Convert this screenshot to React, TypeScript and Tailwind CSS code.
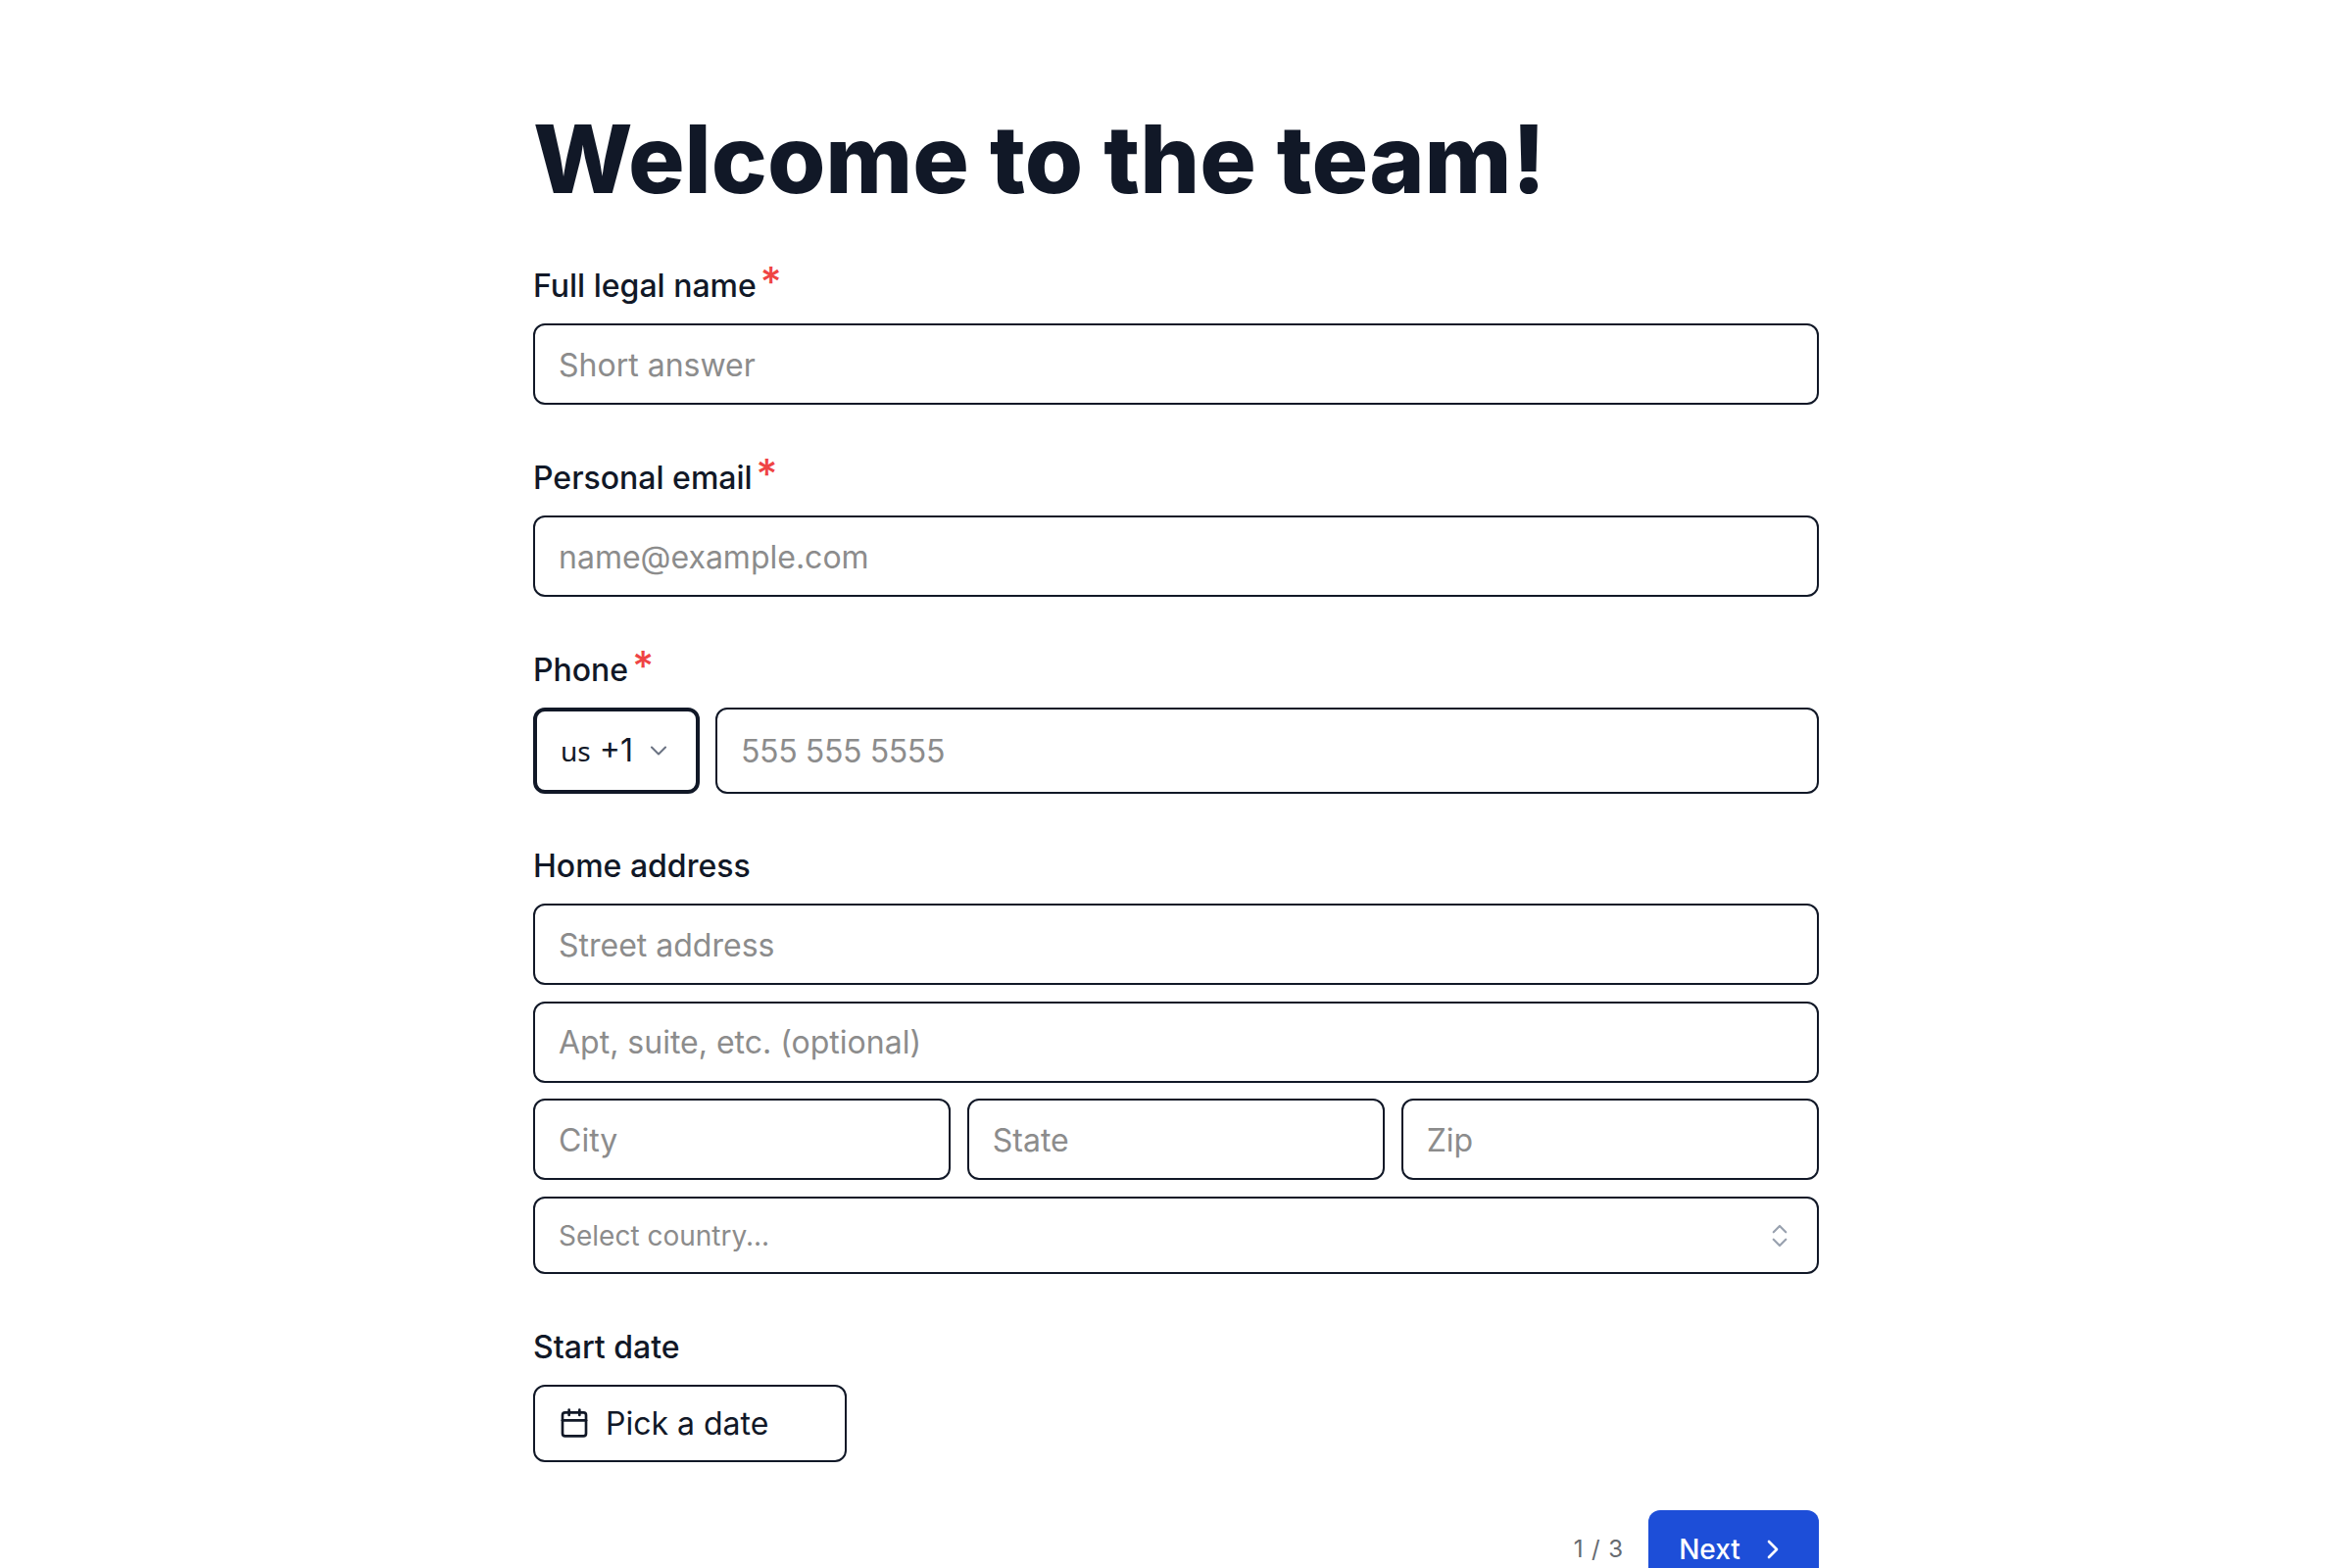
import { Calendar, ChevronDown, ChevronRight, ChevronsUpDown } from 'lucide-react';

const inputClass =
  'block w-full min-w-0 h-[83px] px-[24px] pt-[1px] rounded-[12px] border-2 border-[#111827] bg-white text-[32px] text-[#111827] outline-none placeholder:text-[#8c8c8c]';

function Label({ text, required }: { text: string; required?: boolean }) {
  return (
    <label className="flex items-start h-[44px] mb-[16px] text-[32px] leading-[43px] font-medium text-[#111827]">
      {text}
      {required && (
        <span className="ml-[4px] -mt-[4px] text-[42px] leading-[44px] font-medium text-[#ef4444]">*</span>
      )}
    </label>
  );
}

export default function App() {
  return (
    <div className="h-[1600px] overflow-hidden bg-white font-['Inter',sans-serif]">
      <div className="w-[1312px] ml-[544px] pt-[96px]">
        <h1 className="h-[132px] mb-[42px] text-[96px] leading-[132px] font-extrabold text-[#111827]">
          Welcome to the team!
        </h1>

        <div className="mb-[53px]">
          <Label text="Full legal name" required />
          <input className={inputClass} placeholder="Short answer" />
        </div>

        <div className="mb-[53px]">
          <Label text="Personal email" required />
          <input className={inputClass} placeholder="name@example.com" />
        </div>

        <div className="mb-[52px]">
          <Label text="Phone" required />
          <div className="flex gap-[16px]">
            <button className="flex items-center justify-center gap-[12px] w-[170px] h-[88px] shrink-0 rounded-[12px] border-4 border-[#111827] text-[32px] text-[#111827]">
              <span>
                <span className="font-['Noto_Sans',sans-serif] text-[28px]">us</span> +1
              </span>
              <ChevronDown className="w-[28px] h-[28px] text-gray-500" strokeWidth={1.75} />
            </button>
            <input className={inputClass + ' h-[88px] tracking-[-0.38px]'} placeholder="555 555 5555" />
          </div>
        </div>

        <div className="mb-[53px]">
          <Label text="Home address" />
          <div className="flex flex-col gap-[16.5px]">
            <input className={inputClass} placeholder="Street address" />
            <input className={inputClass} placeholder="Apt, suite, etc. (optional)" />
            <div className="grid grid-cols-3 gap-[16.5px]">
              <input className={inputClass} placeholder="City" />
              <input className={inputClass} placeholder="State" />
              <input className={inputClass} placeholder="Zip" />
            </div>
            <button className="flex items-center justify-between h-[79px] pl-[24px] pr-[23px] pt-[1px] rounded-[12px] border-2 border-[#111827] text-[28px] text-[#8c8c8c]">
              Select country...
              <ChevronsUpDown className="w-[30px] h-[30px] text-gray-400" strokeWidth={1.75} />
            </button>
          </div>
        </div>

        <div className="mb-[49px]">
          <Label text="Start date" />
          <button className="flex items-center gap-[16px] w-[320px] h-[79px] px-[24px] rounded-[12px] border-2 border-[#111827] text-[32px] text-[#111827]">
            <Calendar className="w-[32px] h-[32px]" />
            <span className="pt-[2px]">Pick a date</span>
          </button>
        </div>

        <div className="flex items-start justify-end gap-[25px]">
          <span className="mt-[22px] text-[24px] tracking-[0.9px] text-[#666a70]">1 / 3</span>
          <button className="flex items-center justify-center gap-[17px] w-[174px] h-[81px] shrink-0 rounded-[12px] bg-[#1d4ed8] text-[28px] font-medium text-white">
            Next
            <ChevronRight className="w-[32px] h-[32px]" />
          </button>
        </div>
      </div>
    </div>
  );
}
